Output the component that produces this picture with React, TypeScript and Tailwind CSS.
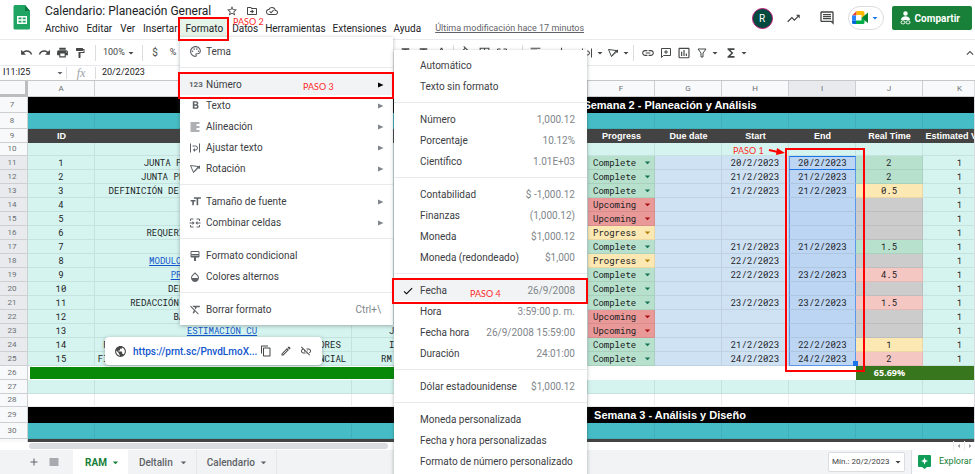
import type { ReactNode } from 'react';
import {
  MdAdd,
  MdArrowDropDown,
  MdArrowLeft,
  MdArrowRight,
  MdBorderAll,
  MdCheck,
  MdContentCopy,
  MdExpandLess,
  MdFormatAlignLeft,
  MdFormatBold,
  MdFormatClear,
  MdFormatColorFill,
  MdFormatColorText,
  MdFormatPaint,
  MdFormatSize,
  MdFormatStrikethrough,
  MdFunctions,
  MdInsertChartOutlined,
  MdLink,
  MdLinkOff,
  MdOpacity,
  MdOutlineCloudDone,
  MdOutlineDriveFileMove,
  MdOutlineInsertComment,
  MdOutlineModeEdit,
  MdOutlinePalette,
  MdPrint,
  MdPublic,
  MdRedo,
  MdReorder,
  MdStarBorder,
  MdTrendingUp,
  MdUndo,
  MdVerticalAlignBottom,
} from 'react-icons/md';

/* ---------- custom glyphs ---------- */

function Glyph({ children, size = 12 }: { children: ReactNode; size?: number }) {
  return (
    <svg width={size} height={size} viewBox="0 0 24 24" fill="none" stroke="currentColor" strokeWidth="2" aria-hidden="true">
      {children}
    </svg>
  );
}

const WrapGlyph = () => (
  <Glyph>
    <path d="M3 3v18M21 3v18M7 8h6a4 4 0 0 1 0 8H9" />
    <path d="M12 12l-4 4 4 4z" fill="currentColor" stroke="none" />
  </Glyph>
);

const RotateGlyph = () => (
  <Glyph>
    <path d="M3 5l6 14 4-6 7-6M3 5l15 2M9 19L20 9" />
    <path d="M22 5v7l-7-4z" fill="currentColor" stroke="none" />
  </Glyph>
);

const MergeGlyph = () => (
  <Glyph>
    <path d="M9 4H3v4M15 4h6v4M9 20H3v-4M15 20h6v-4M1 12h8M23 12h-8" />
    <path d="M7 8l4 4-4 4zM17 8l-4 4 4 4z" fill="currentColor" stroke="none" />
  </Glyph>
);

const CondGlyph = () => (
  <Glyph>
    <path d="M4 3h16v6H4zM4 9v5h16V9" />
    <path d="M10 14h4v8h-4zM4 11h16v3H4z" fill="currentColor" stroke="none" />
  </Glyph>
);

const FunnelGlyph = () => (
  <Glyph>
    <path d="M4 4h16l-6 8v8h-4v-8z" />
  </Glyph>
);

const AddCommentGlyph = () => (
  <Glyph>
    <path d="M3 3h18v14H7l-4 4zM12 6v8M8 10h8" />
  </Glyph>
);

const SheetsLogo = () => (
  <svg width="18" height="25" viewBox="0 0 18 25" aria-hidden="true">
    <path d="M2 0h10l5 6v17a1.500 1.500 0 0 1-1.500 1.500H2A1.500 1.500 0 0 1 .5 23V1.500A1.500 1.500 0 0 1 2 0z" fill="#1fa463" />
    <path d="M12 0l5 6h-5z" fill="#0c7a43" />
    <path d="M4 11h10v8H4z" fill="#fff" />
    <path d="M5.500 12.500h3v1.800h-3zM9.700 12.500h3v1.800h-3zM5.500 15.700h3v1.800h-3zM9.700 15.700h3v1.800h-3z" fill="#1fa463" />
  </svg>
);

const MeetLogo = () => (
  <svg width="17" height="14" viewBox="0 0 17 14" aria-hidden="true">
    <path d="M0 4.500L4.500 0v4.500z" fill="#ea4335" />
    <path d="M0 4.500h4v5H0z" fill="#2684fc" />
    <path d="M0 9.500h4V13H1.500A1.500 1.500 0 0 1 0 11.500z" fill="#0066da" />
    <path d="M4.500 0H11a1.500 1.500 0 0 1 1.500 1.500V5L9.500 7V4h-5z" fill="#ffba00" />
    <path d="M4 9.500h5.500V7l3 2v2.500A1.500 1.500 0 0 1 11 13H4z" fill="#00ac47" />
    <path d="M9.500 7L16 1.500v10.500z" fill="#00832d" />
  </svg>
);

const ShareGlyph = () => (
  <svg width="11" height="14" viewBox="0 0 11 14" fill="#fff" aria-hidden="true">
    <circle cx="5.500" cy="2.500" r="2.200" />
    <path d="M1 9c0-5 9-5 9 0z" />
    <g fill="none" stroke="#fff">
      <rect x="1" y="9.800" width="4" height="3" rx="1.500" />
      <rect x="6" y="9.800" width="4" height="3" rx="1.500" />
    </g>
  </svg>
);

/* ---------- header ---------- */

const menusBefore = ['Archivo', 'Editar', 'Ver', 'Insertar'];
const menusAfter = ['Datos', 'Herramientas', 'Extensiones', 'Ayuda'];

function Header() {
  return (
    <header className="flex h-[39px] shrink-0 justify-between">
      <div className="flex pl-[13px]">
        <div className="pt-[5px]">
          <SheetsLogo />
        </div>
        <div className="pl-[10px] pt-[3px]">
          <div className="flex h-4 items-center text-[#444746]">
            <input
              aria-label="Nombre del documento"
              defaultValue="Calendario: Planeación General"
              className="w-[185px] bg-transparent pl-1 text-[12px] leading-4 text-[#202124] outline-none"
            />
            <div className="flex gap-2">
              <button aria-label="Destacar"><MdStarBorder size={12} /></button>
              <button aria-label="Mover"><MdOutlineDriveFileMove size={12} /></button>
              <button aria-label="Estado"><MdOutlineCloudDone size={12} /></button>
            </div>
          </div>
          <nav className="flex h-[19px] items-center text-[10px] text-[#202124]">
            {menusBefore.map((m) => (
              <button key={m} className="px-1">{m}</button>
            ))}
            <button className="-ml-[2px] h-[19px] bg-[#e6f4ea] px-[6px]">Formato</button>
            {menusAfter.map((m) => (
              <button key={m} className="pr-1 pl-[3px]">{m}</button>
            ))}
            <a href="#historial" className="ml-[10px] text-[9px] text-[#5f6368] underline">
              Última modificación hace 17 minutos
            </a>
          </nav>
        </div>
      </div>
      <div className="flex h-9 items-center pr-[3px] text-[#444746]">
        <span className="flex size-[21px] items-center justify-center rounded-full border border-[#c2187a] bg-[#00493f] text-[10px] text-white">
          R
        </span>
        <button aria-label="Actividad" className="ml-[13px]"><MdTrendingUp size={15} /></button>
        <button aria-label="Comentarios" className="ml-[18px]"><MdOutlineInsertComment size={16} /></button>
        <button aria-label="Meet" className="ml-[13px] flex h-6 w-9 items-center justify-center gap-[2px] rounded-full border border-[#dadce0]">
          <MeetLogo />
          <MdArrowDropDown size={12} className="-mx-[2px] text-[#1a73e8]" />
        </button>
        <button className="ml-2 flex h-6 items-center gap-1 rounded-[2px] bg-[#188038] px-2 text-[10px] font-bold text-white">
          <ShareGlyph />
          <span className="pr-1">Compartir</span>
        </button>
      </div>
    </header>
  );
}

/* ---------- toolbar ---------- */

function Tool({ label, children }: { label: string; children: ReactNode }) {
  return (
    <button aria-label={label} className="flex w-[18px] shrink-0 items-center justify-center">
      {children}
    </button>
  );
}
const Sep = () => <span className="mx-[3px] h-4 w-px shrink-0 bg-[#dadce0]" />;
const Caret = () => (
  <span className="flex w-2 shrink-0 justify-center">
    <MdArrowDropDown size={12} className="shrink-0" />
  </span>
);

function Toolbar() {
  return (
    <div className="flex h-[27px] shrink-0 items-center border-y border-[#e8eaed] pl-[17px] text-[#444746]">
      <Tool label="Deshacer"><MdUndo size={13} /></Tool>
      <Tool label="Rehacer"><MdRedo size={13} /></Tool>
      <Tool label="Imprimir"><MdPrint size={13} /></Tool>
      <Tool label="Copiar formato"><MdFormatPaint size={12} /></Tool>
      <span className="w-[3px] shrink-0" />
      <Sep />
      <div className="flex w-10 shrink-0 items-center">
        <select aria-label="Zoom" className="w-7 appearance-none pl-1 text-[9px]">
          <option>100%</option>
        </select>
        <Caret />
      </div>
      <Sep />
      <Tool label="Moneda"><span className="text-[10px]">$</span></Tool>
      <Tool label="Porcentaje"><span className="text-[9px]">%</span></Tool>
      <span className="w-[214px] shrink-0" />
      <Tool label="Tachado"><MdFormatStrikethrough size={13} /></Tool>
      <Tool label="Subrayado"><MdFormatStrikethrough size={13} /></Tool>
      <Tool label="Color de texto"><MdFormatColorText size={13} /></Tool>
      <Sep />
      <Tool label="Relleno"><MdFormatColorFill size={13} /></Tool>
      <Tool label="Bordes"><MdBorderAll size={13} /></Tool>
      <Tool label="Combinar"><MergeGlyph /></Tool>
      <Caret />
      <Sep />
      <Tool label="Alinear"><MdFormatAlignLeft size={13} /></Tool>
      <Caret />
      <Tool label="Alinear vertical"><MdVerticalAlignBottom size={13} /></Tool>
      <Caret />
      <Tool label="Ajustar"><WrapGlyph /></Tool>
      <Caret />
      <Tool label="Rotar"><RotateGlyph /></Tool>
      <Caret />
      <Sep />
      <span className="w-[2px] shrink-0" />
      <Tool label="Vínculo"><MdLink size={14} /></Tool>
      <Tool label="Comentario"><AddCommentGlyph /></Tool>
      <Tool label="Gráfico"><MdInsertChartOutlined size={14} /></Tool>
      <Tool label="Filtro"><FunnelGlyph /></Tool>
      <Caret />
      <span className="w-[3px] shrink-0" />
      <Tool label="Funciones"><MdFunctions size={14} /></Tool>
      <Caret />
      <button aria-label="Ocultar menús" className="ml-auto -mr-[2px] shrink-0"><MdExpandLess size={14} /></button>
    </div>
  );
}

function FormulaBar() {
  return (
    <div className="flex h-[15px] shrink-0 items-center border-b border-[#c7c7c7] text-[9px] text-[#202124]">
      <input aria-label="Cuadro de nombres" defaultValue="I11:I25" className="w-[54px] pl-[3px] outline-none" />
      <MdArrowDropDown size={12} className="text-[#5f6368]" />
      <span className="h-3 w-px bg-[#dadce0]" />
      <label htmlFor="formula" className="w-7 text-center font-['Liberation_Serif',serif] text-[12px] leading-3 italic text-[#9aa0a6]">
        fx
      </label>
      <span className="h-3 w-px bg-[#dadce0]" />
      <input id="formula" defaultValue="20/2/2023" className="flex-1 pl-[6px] outline-none" />
    </div>
  );
}

/* ---------- sheet ---------- */

type Status = 'Complete' | 'Upcoming' | 'Progress';
type Tone = 'green' | 'yellow' | 'gray' | 'pink';

interface Task {
  name: string;
  /** Characters the centred name takes up in its cell. */
  span?: number;
  end2?: string;
  link?: boolean;
  who?: string;
  status: Status;
  start?: string;
  end?: string;
  real?: string;
  tone: Tone;
}

const tasks: Task[] = [
  { name: 'JUNTA P', span: 29, status: 'Complete', start: '20/2/2023', end: '20/2/2023', real: '2', tone: 'green' },
  { name: 'JUNTA PR', span: 30, status: 'Complete', start: '21/2/2023', end: '21/2/2023', real: '2', tone: 'green' },
  { name: 'DEFINICIÓN DE', span: 42, status: 'Complete', start: '21/2/2023', end: '21/2/2023', real: '0.5', tone: 'yellow' },
  { name: '', status: 'Upcoming', tone: 'gray' },
  { name: '', status: 'Upcoming', tone: 'gray' },
  { name: 'REQUERI', span: 28, status: 'Progress', tone: 'gray' },
  { name: '', status: 'Complete', start: '21/2/2023', end: '21/2/2023', real: '1.5', tone: 'green' },
  { name: 'MODULO', span: 27, link: true, status: 'Progress', start: '22/2/2023', tone: 'gray' },
  { name: 'PR', span: 19, link: true, status: 'Complete', start: '22/2/2023', end: '23/2/2023', real: '4.5', tone: 'pink' },
  { name: 'DEF', span: 20, status: 'Complete', tone: 'gray' },
  { name: 'REDACCIÓN', span: 34, status: 'Complete', start: '23/2/2023', end: '23/2/2023', real: '1.5', tone: 'pink' },
  { name: 'BA', span: 18, status: 'Upcoming', tone: 'gray' },
  { name: 'ESTIMACIÓN CU', link: true, who: 'J', status: 'Upcoming', tone: 'gray' },
  { name: 'P', span: 44, end2: 'DORES', who: 'I', status: 'Complete', start: '21/2/2023', end: '22/2/2023', real: '1', tone: 'yellow' },
  { name: 'FI', span: 46, end2: 'NCIAL', who: 'RM', status: 'Complete', start: '24/2/2023', end: '24/2/2023', real: '2', tone: 'pink' },
];

const toneClass: Record<Tone, string> = {
  green: 'bg-[#b7e1cd]',
  yellow: 'bg-[#fce8b2]',
  gray: 'bg-[#cccccc]',
  pink: 'bg-[#f4c7c3]',
};
const statusClass: Record<Status, string> = {
  Complete: 'bg-[#b7e1cd]',
  Upcoming: 'bg-[#ea9999]',
  Progress: 'bg-[#fce8b2]',
};
const caretClass: Record<Status, string> = {
  Complete: 'text-[#137355]',
  Upcoming: 'text-[#a50e0e]',
  Progress: 'text-[#b07d00]',
};

const line = 'border-r border-b border-black/7';
const columns = ['A', 'B', 'C', 'D', 'E', 'F', 'G', 'H', 'I', 'J', 'K', 'L'];

function RowHead({ n, on = false }: { n: number | string; on?: boolean }) {
  return (
    <th className={`border-r border-b border-[#cdcfd1] text-[8px] leading-3 font-normal text-[#6b7075] ${on ? 'bg-[#e8eaed]' : 'bg-[#f8f9fa]'}`}>
      <span className="pr-[3px]">{n}</span>
    </th>
  );
}

function padName({ name, span = 0, end2 = '' }: Task) {
  return name + '\u00a0'.repeat(Math.max(0, span - name.length - end2.length)) + end2;
}

function Banner({ n, children }: { n: number; children: string }) {
  return (
    <tr className="h-4">
      <RowHead n={n} />
      <td colSpan={12} className="bg-black text-center font-['Liberation_Sans',sans-serif] text-[11px] leading-4 font-bold text-white">
        {children}
      </td>
    </tr>
  );
}

function PlainRow({ n, height, cell }: { n: number; height: string; cell: string }) {
  return (
    <tr className={height}>
      <RowHead n={n} />
      {columns.map((c) => (
        <td key={c} className={`${cell} ${line}`} />
      ))}
    </tr>
  );
}

function TaskRow({ task, index }: { task: Task; index: number }) {
  return (
    <tr className="h-[14px]">
      <RowHead n={index + 11} on />
      <td className={`bg-[#d5f4ef] ${line}`}>{index + 1}</td>
      <td className={`bg-[#d5f4ef] ${line}`}>
        <div className="pr-[2px] whitespace-nowrap">
          {task.link ? (
            <a href="#tarea" className="text-[#1155cc]">
              <span className="underline">{task.name}</span>
              {padName(task).slice(task.name.length)}
            </a>
          ) : (
            padName(task)
          )}
        </div>
      </td>
      <td className={`bg-[#d5f4ef] text-left ${line}`}>
        <div className={task.who === 'RM' ? 'pl-[29px]' : 'pl-[37px]'}>{task.who}</div>
      </td>
      <td className={`bg-[#d5f4ef] ${line}`} />
      <td className={`bg-[#d5f4ef] ${line}`} />
      <td className={`${statusClass[task.status]} ${line}`}>
        <div className="flex h-[13px] items-center justify-between pl-[5px]">
          <select aria-label={`Progress ${index + 1}`} defaultValue={task.status} className="h-[13px] w-12 appearance-none leading-[13px]">
            <option>{task.status}</option>
          </select>
          <MdArrowDropDown size={13} className={caretClass[task.status]} />
        </div>
      </td>
      <td className={`bg-[#cfe2f3] ${line}`} />
      <td className={`bg-[#cfe2f3] ${line}`}>{task.start}</td>
      <td
        className={`border-x border-x-[#5a97ea] bg-[#bcd5f2] ${
          index === 0
            ? 'border-y border-y-[#1a73e8]'
            : index === tasks.length - 1
              ? 'border-b border-b-[#5a97ea]'
              : 'border-b border-b-black/7'
        }`}
      >
        {task.end}
      </td>
      <td className={`${toneClass[task.tone]} ${line}`}>{task.real}</td>
      <td className={`bg-[#d5f4ef] ${line}`}>1</td>
      <td className={`bg-[#d5f4ef] ${line}`} />
    </tr>
  );
}

const headings = ['ID', '', '', '', '', 'Progress', 'Due date', 'Start', 'End', 'Real Time', 'Estimated Value', ''];

function Sheet() {
  return (
    <main className="min-h-0 flex-1 overflow-hidden border-r border-[#dadce0]">
      <table className="w-[1312px] table-fixed border-separate border-spacing-0 text-center font-['Roboto_Mono','DejaVu_Sans_Mono',monospace] text-[9px] leading-3 text-[#202124] [&_td]:p-0 [&_th]:p-0">
        <colgroup>
          <col className="w-7" />
          <col className="w-[67px]" />
          <col className="w-[257px]" />
          <col className="w-[102px]" />
          <col className="w-[67px]" />
          <col className="w-[67px]" />
          <col className="w-[67px]" />
          <col className="w-[67px]" />
          <col className="w-[67px]" />
          <col className="w-[67px]" />
          <col className="w-[67px]" />
          <col className="w-[74px]" />
          <col />
        </colgroup>
        <thead>
          <tr className="h-4">
            <td className="border-r-3 border-b-3 border-[#bdbdbd] bg-[#f8f9fa]" />
            {columns.map((c) => (
              <th
                key={c}
                className={`border-r border-b border-[#cdcfd1] font-[Roboto,sans-serif] text-[8px] font-normal text-[#6b7075] ${
                  c === 'I' ? 'bg-[#e8eaed]' : 'bg-[#f8f9fa]'
                }`}
              >
                {c}
              </th>
            ))}
          </tr>
        </thead>
        <tbody className="[&_th]:font-[Roboto,sans-serif]">
          <Banner n={7}>Semana 2 - Planeación y Análisis</Banner>
          <PlainRow n={8} height="h-4" cell="bg-[#46bdc6]" />
          <tr className="h-[14px]">
            <RowHead n={9} />
            {headings.map((h, i) => (
              <td key={i} className="bg-[#434343] font-['Liberation_Sans',sans-serif] font-bold whitespace-nowrap text-white">
                {h}
              </td>
            ))}
          </tr>
          <PlainRow n={10} height="h-[13px]" cell="bg-[#d5f4ef]" />
          {tasks.map((t, i) => (
            <TaskRow key={i} task={t} index={i} />
          ))}
          <tr className="h-[14px]">
            <RowHead n={26} />
            <td colSpan={5} className="bg-white">
              <div className="mx-[2px] h-3 bg-[#088a08]" />
            </td>
            <td colSpan={4} className="bg-white" />
            <td className="bg-[#38761d] font-['Open_Sans',sans-serif] font-bold text-white">65.69%</td>
            <td colSpan={2} className="bg-[#38761d]" />
          </tr>
          <PlainRow n={27} height="h-[14px]" cell="bg-[#d5f4ef]" />
          <PlainRow n={28} height="h-[13px]" cell="bg-white" />
          <Banner n={29}>Semana 3 - Análisis y Diseño</Banner>
          <PlainRow n={30} height="h-4" cell="bg-[#46bdc6]" />
          <tr className="h-[13px]">
            <RowHead n="" />
            <td colSpan={12} className="bg-[#434343]" />
          </tr>
        </tbody>
      </table>
    </main>
  );
}

function Scrollbar() {
  return (
    <div className="flex h-2 shrink-0 items-center bg-white pl-[29px]">
      <div className="h-[6px] w-[359px] rounded-full bg-[#dadce0]" />
      <div className="ml-auto flex text-[#80868b]">
        <button aria-label="Desplazar a la izquierda" className="border-l border-[#e8eaed]"><MdArrowLeft size={10} /></button>
        <button aria-label="Desplazar a la derecha" className="border-l border-[#e8eaed]"><MdArrowRight size={10} /></button>
      </div>
    </div>
  );
}

function Tabs() {
  return (
    <footer className="flex h-6 shrink-0 items-center bg-[#f1f3f4] text-[10px] font-medium text-[#5f6368]">
      <button aria-label="Añadir hoja" className="ml-7"><MdAdd size={12} /></button>
      <button aria-label="Todas las hojas" className="ml-2"><MdReorder size={12} /></button>
      <button className="ml-[13px] flex h-6 items-center gap-[2px] bg-white px-[6px] pl-3 font-bold text-[#188038]">
        RAM <MdArrowDropDown size={13} />
      </button>
      <button className="flex h-6 items-center gap-1 border-r border-[#e4e6e8] px-[6px] pl-[11px]">
        Deltalin <MdArrowDropDown size={13} />
      </button>
      <button className="flex h-6 items-center gap-[2px] border-r border-[#e4e6e8] px-[6px] pl-[10px]">
        Calendario <MdArrowDropDown size={13} />
      </button>
      <div className="mr-[6px] ml-auto flex h-5 items-center rounded-[2px] border border-[#dadce0] bg-white pl-[3px] text-[8px] font-normal text-[#3c4043]">
        <select aria-label="Resumen" className="w-[61px] appearance-none">
          <option>Mín.: 20/2/2023</option>
        </select>
        <MdArrowDropDown size={12} className="-ml-px" />
      </div>
      <button className="flex h-6 w-16 items-center gap-2 border-l border-[#dadce0] bg-white pl-[6px] text-[9px] font-normal text-[#188038]">
        <svg width="13" height="14" viewBox="0 0 13 14" aria-hidden="true">
          <path d="M1 0h11a1 1 0 0 1 1 1v10a1 1 0 0 1-1 1H9l-2.500 2L4 12H1a1 1 0 0 1-1-1V1a1 1 0 0 1 1-1z" fill="#0f9d58" />
          <path d="M6.500 2.500l1 2.500 2.500 1-2.500 1-1 2.500-1-2.500L3 6l2.500-1z" fill="#fff" />
        </svg>
        Explorar
      </button>
    </footer>
  );
}

/* ---------- menus ---------- */

interface Entry {
  label: string;
  icon?: ReactNode;
  right?: string;
  sub?: boolean;
  on?: boolean;
}

const formatGroups: Entry[][] = [
  [{ label: 'Tema', icon: <MdOutlinePalette size={13} /> }],
  [
    { label: 'Número', icon: <span className="text-[8px] leading-3 font-bold">123</span>, sub: true, on: true },
    { label: 'Texto', icon: <MdFormatBold size={13} />, sub: true },
    { label: 'Alineación', icon: <MdFormatAlignLeft size={12} />, sub: true },
    { label: 'Ajustar texto', icon: <WrapGlyph />, sub: true },
    { label: 'Rotación', icon: <RotateGlyph />, sub: true },
  ],
  [
    { label: 'Tamaño de fuente', icon: <MdFormatSize size={13} />, sub: true },
    { label: 'Combinar celdas', icon: <MergeGlyph />, sub: true },
  ],
  [
    { label: 'Formato condicional', icon: <CondGlyph /> },
    { label: 'Colores alternos', icon: <MdOpacity size={12} /> },
  ],
  [{ label: 'Borrar formato', icon: <MdFormatClear size={13} />, right: 'Ctrl+\\' }],
];

const numberGroups: Entry[][] = [
  [{ label: 'Automático' }, { label: 'Texto sin formato' }],
  [
    { label: 'Número', right: '1,000.12' },
    { label: 'Porcentaje', right: '10.12%' },
    { label: 'Científico', right: '1.01E+03' },
  ],
  [
    { label: 'Contabilidad', right: '$ -1,000.12' },
    { label: 'Finanzas', right: '(1,000.12)' },
    { label: 'Moneda', right: '$1,000.12' },
    { label: 'Moneda (redondeado)', right: '$1,000' },
  ],
  [
    { label: 'Fecha', right: '26/9/2008', on: true, icon: <MdCheck size={12} className="text-black" /> },
    { label: 'Hora', right: '3:59:00 p. m.' },
    { label: 'Fecha hora', right: '26/9/2008 15:59:00' },
    { label: 'Duración', right: '24:01:00' },
  ],
  [{ label: 'Dólar estadounidense', right: '$1,000.12' }],
  [{ label: 'Moneda personalizada' }, { label: 'Fecha y hora personalizadas' }, { label: 'Formato de número personalizado' }],
];

function Menu({ groups, place, iconBox }: { groups: Entry[][]; place: string; iconBox: string }) {
  return (
    <div role="menu" className={`absolute bg-white py-[5px] text-[10px] text-[#3c4043] shadow-[0_1px_4px_rgba(60,64,67,0.4)] ${place}`}>
      {groups.map((group, g) => (
        <div key={g} className={g > 0 ? 'mt-[5px] border-t border-[#e8eaed] pt-[6px]' : ''}>
          {group.map((e) => (
            <button
              key={e.label}
              role="menuitem"
              className={`flex h-[21px] w-full items-center pr-3 text-left whitespace-nowrap ${e.on ? 'bg-[#f1f3f4]' : ''}`}
            >
              <span className={`flex shrink-0 text-[#5f6368] ${iconBox}`}>{e.icon}</span>
              <span className="flex-1">{e.label}</span>
              {e.right && <span className="text-[#80868b]">{e.right}</span>}
              {e.sub && (
                <svg width="6" height="6" viewBox="0 0 6 6" className={e.on ? 'mr-[-3px] text-black' : 'mr-[-3px] text-[#80868b]'} aria-hidden="true">
                  <path d="M0 .5v5L5.500 3z" fill="currentColor" />
                </svg>
              )}
            </button>
          ))}
        </div>
      ))}
    </div>
  );
}

function LinkCard() {
  return (
    <div className="absolute top-[337px] left-[105px] flex h-7 w-[217px] items-center rounded-[4px] bg-white pl-[9px] text-[#444746] shadow-[0_1px_4px_rgba(60,64,67,0.4)]">
      <MdPublic size={13} />
      <a href="#enlace" className="ml-[6px] w-[127px] text-[10px] font-medium text-[#1155cc]">https://prnt.sc/PnvdLmoX...</a>
      <div className="flex gap-2">
        <button aria-label="Copiar"><MdContentCopy size={12} /></button>
        <button aria-label="Editar vínculo"><MdOutlineModeEdit size={12} /></button>
        <button aria-label="Quitar vínculo"><MdLinkOff size={12} /></button>
      </div>
    </div>
  );
}

/* ---------- step marks ---------- */

function Mark({ box }: { box: string }) {
  return <div className={`pointer-events-none absolute border-2 border-[#ff0000] ${box}`} />;
}
function Step({ n, place }: { n: number; place: string }) {
  return (
    <span className={`pointer-events-none absolute font-['Lato',sans-serif] text-[9px] leading-3 whitespace-nowrap text-[#ff2a2a] ${place}`}>
      PASO {n}
    </span>
  );
}

export default function App() {
  return (
    <div className="relative flex h-screen flex-col overflow-hidden bg-white font-['Roboto',sans-serif]">
      <Header />
      <Toolbar />
      <FormulaBar />
      <Sheet />
      <Scrollbar />
      <Tabs />

      <span className="absolute top-[361px] left-[853px] size-[5px] bg-[#1a73e8]" />
      <LinkCard />
      <Menu groups={formatGroups} place="top-[37px] left-[180px] w-[213px] pt-1" iconBox="w-[26px] pl-[9px]" />
      <Menu groups={numberGroups} place="top-[50px] left-[394px] w-[193px]" iconBox="w-[26px] pl-[8px]" />

      <Mark box="top-[17px] left-[178px] h-6 w-[51px]" />
      <Mark box="top-[72px] left-[178px] h-[27px] w-[216px]" />
      <Mark box="top-[278px] left-[392px] h-[26px] w-[196px]" />
      <Mark box="top-[148px] left-[785px] h-[224px] w-20" />
      <Step n={1} place="top-[145px] left-[733px]" />
      <Step n={2} place="top-[16px] left-[233px]" />
      <Step n={3} place="top-[81px] left-[303px]" />
      <Step n={4} place="top-[288px] left-[470px]" />
      <svg className="absolute top-[147px] left-[768px]" width="18" height="10" viewBox="0 0 18 10" aria-hidden="true">
        <path d="M1 3l9 2" stroke="#f00" strokeWidth="2" />
        <path d="M9 1l8 5-9 2z" fill="#f00" />
      </svg>
    </div>
  );
}
